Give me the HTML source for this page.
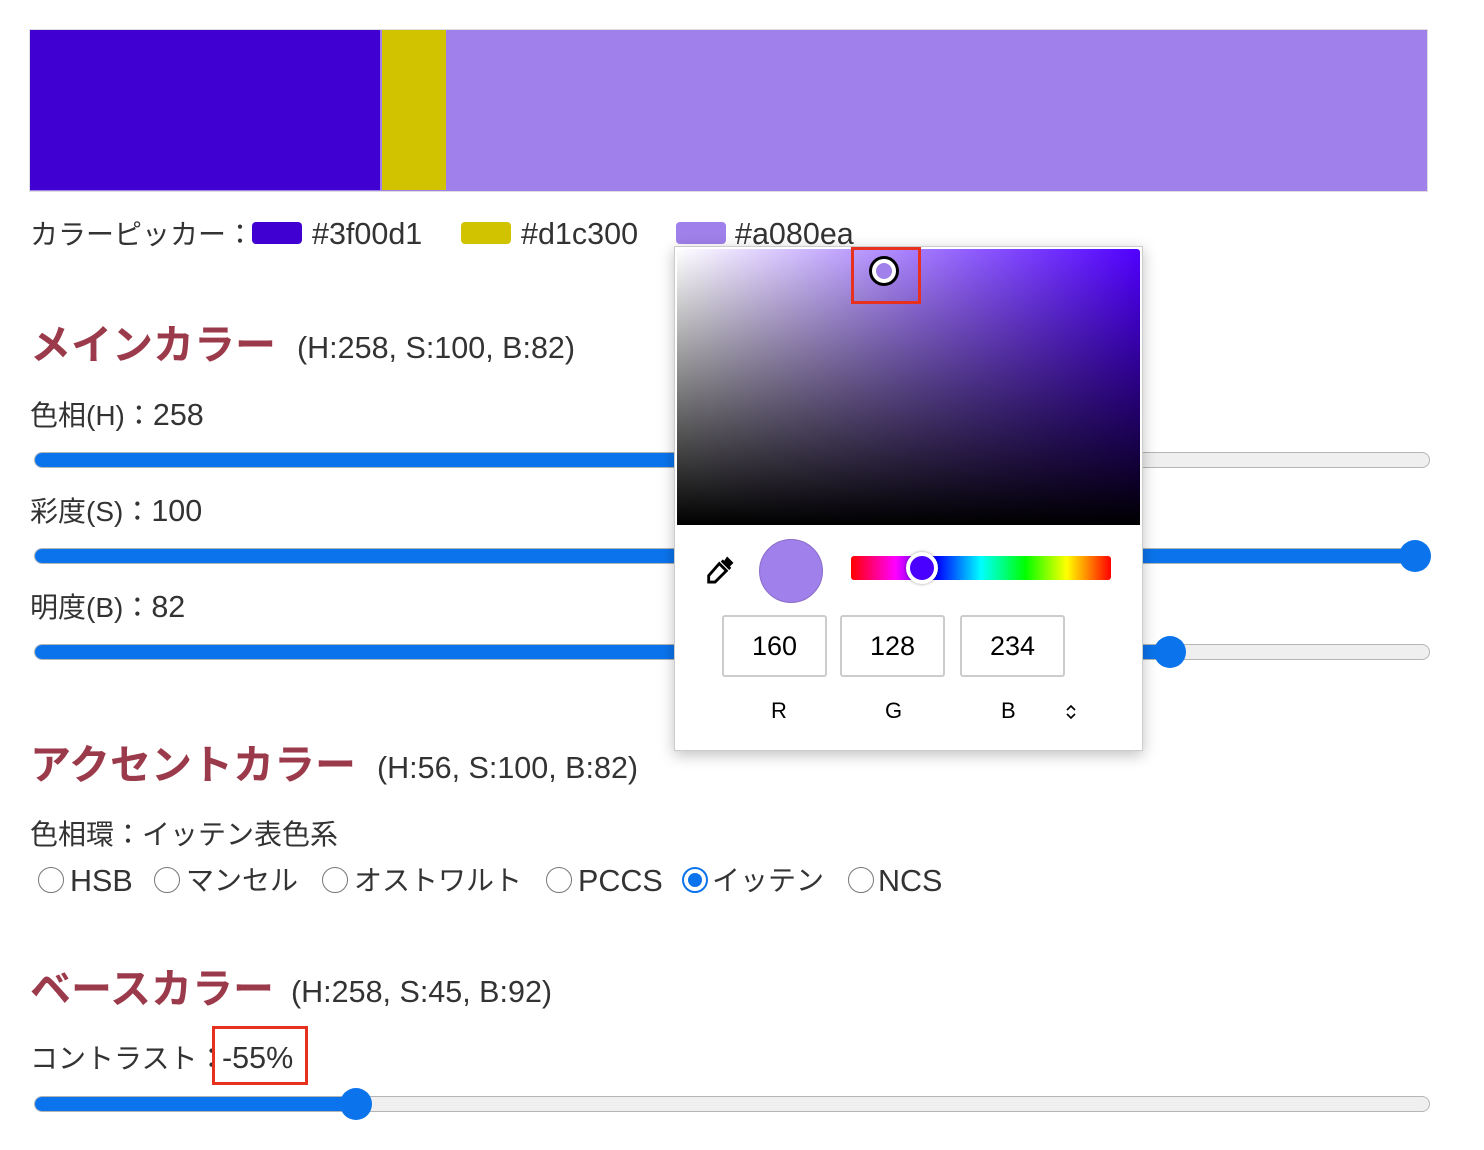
<!DOCTYPE html>
<html><head><meta charset="utf-8"><style>
*{margin:0;padding:0;box-sizing:border-box}
body{width:1484px;height:1150px;background:#fff;position:relative;overflow:hidden;font-family:"Liberation Sans","Noto Sans CJK JP",sans-serif;color:#333}
.a{position:absolute;white-space:nowrap}
.t{font-size:28px;line-height:32px}
.l{font-size:30.5px}
.h{font-size:41px;font-weight:bold;color:#9b3a4a;line-height:44px}
.track{position:absolute;left:34px;width:1396px;height:16px;border-radius:8px;background:#efefef;border:1.5px solid #b5b5b5;overflow:hidden}
.fill{position:absolute;left:0;top:0;bottom:0;background:#0b74ec}
.th{position:absolute;width:32px;height:32px;border-radius:50%;background:#0b74ec}
.sw{position:absolute;width:50px;height:22px;border-radius:4px;top:222px}
.rad{position:absolute;width:26px;height:26px;border-radius:50%;border:1.5px solid #777;top:867px;background:#fff}
.inp{position:absolute;top:615px;width:105px;height:62px;border:2px solid #ccc;border-radius:3px;font-size:27px;text-align:center;line-height:58px;color:#000}
.lb{position:absolute;top:698px;font-size:22px;color:#000}
</style></head><body>
<div class="a" style="left:29px;top:29px;width:1399px;height:163px;border:1.5px solid #ddd;background:#a080ea">
<div class="a" style="left:0;top:0;width:350px;height:160px;background:#3f00d1"></div>
<div class="a" style="left:352px;top:0;width:64px;height:160px;background:#d1c300"></div>
</div>
<div class="a t" style="left:30px;top:219px">カラーピッカー：</div>
<div class="sw" style="left:252px;background:#3f00d1"></div>
<div class="a t l" style="left:312px;top:218px">#3f00d1</div>
<div class="sw" style="left:461px;background:#d1c300"></div>
<div class="a t l" style="left:521px;top:218px">#d1c300</div>
<div class="sw" style="left:676px;background:#a080ea"></div>
<div class="a t l" style="left:735px;top:218px">#a080ea</div>

<div class="a h" style="left:30px;top:323px">メインカラー</div>
<div class="a t l" style="left:297px;top:332px">(H:258, S:100, B:82)</div>
<div class="a t" style="left:30px;top:399px">色相(H)：<span class="l">258</span></div>
<div class="track" style="top:452px"><div class="fill" style="width:700px"></div></div>
<div class="a t" style="left:30px;top:495px">彩度(S)：<span class="l">100</span></div>
<div class="track" style="top:548px"><div class="fill" style="width:1396px"></div></div>
<div class="th" style="left:1399px;top:540px"></div>
<div class="a t" style="left:30px;top:591px">明度(B)：<span class="l">82</span></div>
<div class="track" style="top:644px"><div class="fill" style="width:1136px"></div></div>
<div class="th" style="left:1154px;top:636px"></div>

<div class="a h" style="left:30px;top:743px">アクセントカラー</div>
<div class="a t l" style="left:377px;top:752px">(H:56, S:100, B:82)</div>
<div class="a t" style="left:30px;top:819px">色相環：イッテン表色系</div>
<div class="rad" style="left:38px"></div><div class="a t" style="left:70px;top:865px"><span class="l">HSB</span></div>
<div class="rad" style="left:154px"></div><div class="a t" style="left:186px;top:865px">マンセル</div>
<div class="rad" style="left:322px"></div><div class="a t" style="left:354px;top:865px">オストワルト</div>
<div class="rad" style="left:546px"></div><div class="a t" style="left:578px;top:865px"><span class="l">PCCS</span></div>
<div class="rad" style="left:682px;border:2px solid #0b74ec"><div style="position:absolute;left:4px;top:4px;width:14px;height:14px;border-radius:50%;background:#0b74ec"></div></div>
<div class="a t" style="left:712px;top:865px">イッテン</div>
<div class="rad" style="left:848px"></div><div class="a t" style="left:878px;top:865px"><span class="l">NCS</span></div>

<div class="a h" style="left:30px;top:967px">ベースカラー</div>
<div class="a t l" style="left:291px;top:976px">(H:258, S:45, B:92)</div>
<div class="a t" style="left:30px;top:1043px">コントラスト：</div>
<div class="a t l" style="left:222px;top:1042px">-55%</div>
<div class="a" style="left:212px;top:1026px;width:96px;height:59px;border:3px solid #e8301f"></div>
<div class="track" style="top:1096px"><div class="fill" style="width:322px"></div></div>
<div class="th" style="left:340px;top:1088px"></div>

<!-- picker -->
<div class="a" style="left:674px;top:246px;width:469px;height:505px;background:#fff;border:1px solid #ccc;box-shadow:0 4px 14px rgba(0,0,0,.25)">
<div class="a" style="left:2px;top:2px;width:463px;height:276px;border-radius:3px 3px 0 0;background:linear-gradient(to top,#000,rgba(0,0,0,0)),linear-gradient(to right,#fff,#5000ff)"></div>
<div class="a" style="left:194px;top:9px;width:30px;height:30px;border-radius:50%;border:3.5px solid #000;background:#fff"><div style="position:absolute;left:3.5px;top:3.5px;width:16px;height:16px;border-radius:50%;background:#a080ea"></div></div>
<div class="a" style="left:176px;top:0px;width:70px;height:57px;border:3px solid #e8301f"></div>
<svg class="a" style="left:28px;top:306px" width="34" height="34" viewBox="0 0 24 24"><path d="M17 2.5l4.5 4.5-2.5 2.5 1 1-1.5 1.5-6-6L14 4.5l1 1z" fill="#000"/><path d="M11.5 7.5l5 5-8 8H4v-4.5z" fill="none" stroke="#000" stroke-width="2"/></svg>
<div class="a" style="left:84px;top:292px;width:64px;height:64px;border-radius:50%;background:#a080ea;border:1.5px solid #8a6cc8"></div>
<div class="a" style="left:176px;top:309px;width:260px;height:24px;border-radius:3px;background:linear-gradient(to right,#f00,#f0f 17%,#00f 33%,#0ff 50%,#0f0 67%,#ff0 83%,#f00)"></div>
<div class="a" style="left:231px;top:305px;width:32px;height:32px;border-radius:50%;background:#4a00ff;border:4px solid #fff;box-shadow:0 0 3px rgba(0,0,0,.4)"></div>
</div>
<div class="inp" style="left:722px">160</div>
<div class="inp" style="left:840px">128</div>
<div class="inp" style="left:960px">234</div>
<div class="lb" style="left:771px">R</div>
<div class="lb" style="left:885px">G</div>
<div class="lb" style="left:1001px">B</div>
<svg class="a" style="left:1065px;top:703px" width="12" height="18" viewBox="0 0 12 18"><path d="M2 7l4-4 4 4M2 11l4 4 4-4" fill="none" stroke="#000" stroke-width="1.6"/></svg>
</body></html>
